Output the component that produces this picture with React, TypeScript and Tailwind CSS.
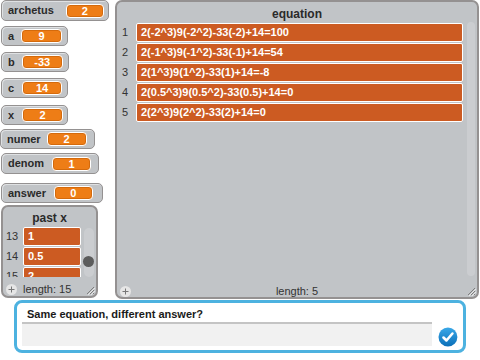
import React from "react";

const font = { fontFamily: '"Liberation Sans", Arial, sans-serif' };

function Monitor({ label, value, top, left, width, gap, valueWidth, height = 20 }: { label: string; value: string; top: number; left: number; width: number; gap: number; valueWidth: number; height?: number }) {
  return (
    <div
      className="absolute flex items-center rounded-[5px] border border-[#949191] bg-[#c1c4c7] pl-[6px] shadow-[inset_1px_1px_0_#dfe1e3]"
      style={{ top, left, width, height, gap }}
    >
      <span className="text-[11px] font-bold text-[#2a2a2a]">{label}</span>
      <div
        className="h-[14px] rounded-[4px] border border-white bg-[#ee7d16] text-center text-[11px] font-bold leading-[12px] text-white shadow-[inset_0_0_0_1px_#d46a0c]"
        style={{ width: valueWidth }}
      >
        {value}
      </div>
    </div>
  );
}

function Resize() {
  return (
    <svg className="absolute bottom-[1px] right-[1px]" width="10" height="10" viewBox="0 0 10 10">
      <path d="M9 2 L2 9 M9 5 L5 9 M9 8 L8 9" stroke="#7d7d7d" strokeWidth="1" />
      <path d="M10 3 L3 10 M10 6 L6 10" stroke="#e8e8e8" strokeWidth="1" />
    </svg>
  );
}

function Plus() {
  return (
    <div className="flex h-[11px] w-[11px] shrink-0 items-center justify-center rounded-full bg-[#e6e6e6]">
      <svg width="7" height="7" viewBox="0 0 7 7"><path d="M3.5 0.5 V6.5 M0.5 3.5 H6.5" stroke="#777" strokeWidth="1" /></svg>
    </div>
  );
}

function Item({ index, text, indexWidth, pad }: { index: string; text: string; indexWidth: number; pad: number }) {
  return (
    <div className="flex h-[19px] shrink-0 items-center">
      <span className="text-[11px] text-[#333]" style={{ width: indexWidth, paddingLeft: pad }}>{index}</span>
      <div className="h-[19px] flex-1 rounded-[2px] border border-white bg-[#cc5b22] pl-[4px] text-[11px] font-bold leading-[17px] text-white">{text}</div>
    </div>
  );
}

const rows = [
  "2(-2^3)9(-2^2)-33(-2)+14=100",
  "2(-1^3)9(-1^2)-33(-1)+14=54",
  "2(1^3)9(1^2)-33(1)+14=-8",
  "2(0.5^3)9(0.5^2)-33(0.5)+14=0",
  "2(2^3)9(2^2)-33(2)+14=0",
];

export default function App() {
  return (
    <div className="relative h-[360px] w-[480px] overflow-hidden bg-white" style={font}>
      <Monitor label="archetus" value="2" top={0} left={1} width={108} gap={12} valueWidth={38} height={21} />
      <Monitor label="a" value="9" top={26} left={1} width={67} gap={7} valueWidth={41} />
      <Monitor label="b" value="-33" top={52} left={1} width={68} gap={7} valueWidth={41} />
      <Monitor label="c" value="14" top={78} left={1} width={67} gap={8} valueWidth={40} />
      <Monitor label="x" value="2" top={105} left={1} width={67} gap={8} valueWidth={41} />
      <Monitor label="numer" value="2" top={129} left={0} width={95} gap={6} valueWidth={40} />
      <Monitor label="denom" value="1" top={153} left={1} width={98} gap={8} valueWidth={39} height={21} />
      <Monitor label="answer" value="0" top={183} left={1} width={102} gap={8} valueWidth={39} />

      {/* past x list */}
      <div className="absolute left-[1px] top-[205px] flex h-[93px] w-[97px] flex-col overflow-hidden rounded-[7px] border-2 border-[#949191] bg-[#c1c4c7]">
        <div className="h-[20px] pt-[2px] text-center text-[12px] font-bold text-[#2a2a2a]">past x</div>
        <div className="flex h-[50px] gap-[3px]">
          <div className="flex w-[78px] flex-col gap-[1px] overflow-hidden">
            {[["13", "1"], ["14", "0.5"], ["15", "2"]].map(([i, v]) => (
              <Item key={i} index={i} text={v} indexWidth={20} pad={3} />
            ))}
          </div>
          <div className="relative mt-[1px] h-[49px] w-[10px] rounded-full bg-[#cbcdd0]">
            <div className="absolute -left-[1px] top-[28px] h-[11px] w-[11px] rounded-full bg-[#5c5c5c]" />
          </div>
        </div>
        <div className="flex items-center gap-[6px] pl-[3px] pt-[4px]">
          <Plus />
          <span className="text-[11px] text-[#333]">length: 15</span>
        </div>
        <Resize />
      </div>

      {/* equation list */}
      <div className="absolute left-[115px] top-0 flex h-[299px] w-[364px] flex-col overflow-hidden rounded-[7px] border-2 border-[#949191] bg-[#c1c4c7]">
        <div className="h-[19px] pt-[3px] text-center text-[12px] font-bold text-[#2a2a2a]">equation</div>
        <div className="flex h-[256px] gap-[4px]">
          <div className="flex w-[346px] flex-col gap-[1px] pt-[2px]">
            {rows.map((r, i) => (
              <Item key={i} index={String(i + 1)} text={r} indexWidth={19} pad={5} />
            ))}
          </div>
          <div className="mt-[1px] h-[254px] w-[8px] rounded-full bg-[#cbcdd0]" />
        </div>
        <div className="relative flex items-center pl-[3px] pt-[9px]">
          <Plus />
          <span className="absolute left-0 right-0 text-center text-[11px] text-[#333]">length: 5</span>
        </div>
        <Resize />
      </div>

      {/* ask box */}
      <div className="absolute left-[14px] top-[300px] flex h-[53px] w-[452px] flex-col rounded-[8px] border-[3px] border-[#4db2e0] bg-white px-[5px] pt-[3px]">
        <div className="h-[15px] pl-[5px] text-[11px] font-bold text-[#1a1a1a]">Same equation, different answer?</div>
        <div className="flex items-center gap-[6px]">
          <div className="h-[24px] w-[412px] border-t-2 border-[#c4c4c4] bg-[#f1f1f1]" />
          <svg className="mt-[6px]" width="20" height="20" viewBox="0 0 20 20">
            <defs>
              <linearGradient id="g" x1="0" y1="0" x2="0" y2="1">
                <stop offset="0" stopColor="#3aa8e8" />
                <stop offset="1" stopColor="#0b6fb8" />
              </linearGradient>
            </defs>
            <circle cx="10" cy="10" r="9.5" fill="url(#g)" />
            <path d="M5.5 10.5 L8.5 13.5 L14.5 6.5" fill="none" stroke="white" strokeWidth="2.6" strokeLinecap="round" strokeLinejoin="round" />
          </svg>
        </div>
      </div>
    </div>
  );
}
